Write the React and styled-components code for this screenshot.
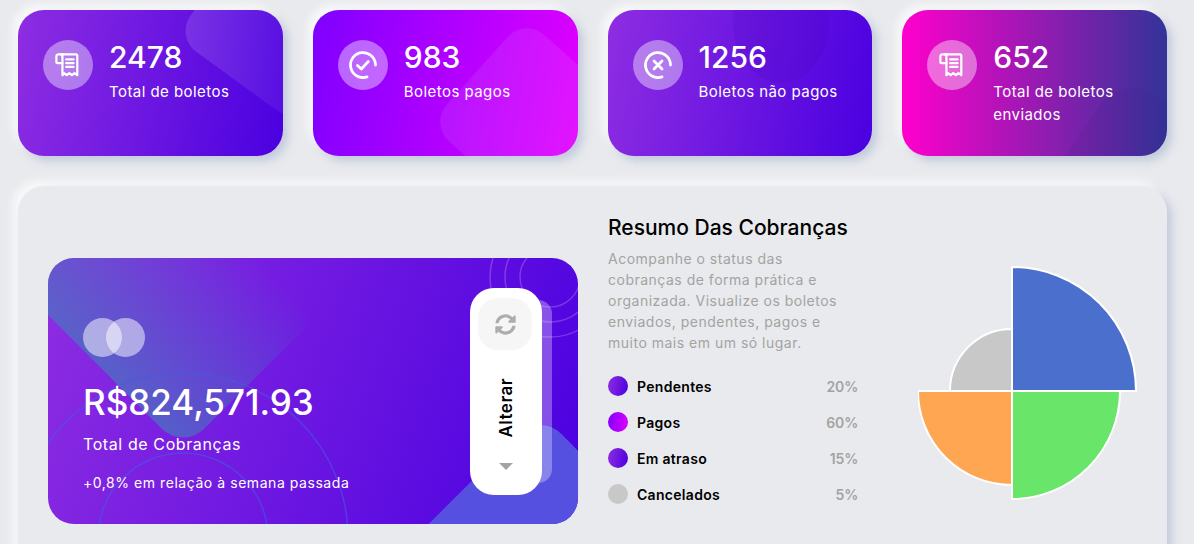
import React from "react";
import styled, { createGlobalStyle } from "styled-components";
import { FaSyncAlt } from "react-icons/fa";

const stats = [
  { value: "2478", label: "Total de boletos", tone: "violet", icon: "receipt", blob: "one" },
  { value: "983", label: "Boletos pagos", tone: "magenta", icon: "check", blob: "two" },
  { value: "1256", label: "Boletos não pagos", tone: "violet", icon: "cross", blob: "three" },
  { value: "652", label: "Total de boletos enviados", tone: "sunset", icon: "receipt", blob: "four" },
];

const legend = [
  { name: "Pendentes", pct: "20%", tone: "violet" },
  { name: "Pagos", pct: "60%", tone: "magenta" },
  { name: "Em atraso", pct: "15%", tone: "violet" },
  { name: "Cancelados", pct: "5%", tone: "grey" },
];

const gradients = {
  violet: "linear-gradient(100deg, #8e2de2, #4a00e0)",
  magenta: "linear-gradient(100deg, #7f00ff, #e100ff)",
  sunset: "linear-gradient(90deg, #ff00cc, #333399)",
  grey: "linear-gradient(#c8c8c8, #c8c8c8)",
};

const blobs = {
  one: `
    left: 187px; top: -65px; width: 150px; height: 150px; border-radius: 26px;
    transform: rotate(36deg);
    background: linear-gradient(54deg, rgba(255,255,255,.14), rgba(255,255,255,0) 85%);
  `,
  two: `
    left: 146px; top: 37px; width: 143px; height: 143px; border-radius: 26px;
    transform: rotate(42deg);
    background: rgba(255,255,255,.08);
  `,
  three: `
    left: 125px; top: -47px; width: 96px; height: 120px; border-radius: 50%;
    background: rgba(60,0,170,.12);
  `,
  four: `
    left: 172px; top: 88px; width: 130px; height: 130px; border-radius: 40px;
    transform: rotate(35deg);
    background: rgba(50,20,110,.08);
  `,
};

const ReceiptIcon = () => (
  <svg width="26" height="26" viewBox="0 0 28 28" fill="none" stroke="#fff" strokeWidth="2.4" strokeLinecap="round" strokeLinejoin="round">
    <path d="M9 2.5H3.5a2 2 0 0 0-2 2V11a1 1 0 0 0 1 1H8" />
    <path d="M6 2.5h16.5a1.5 1.5 0 0 1 1.5 1.5v21l-3-2.2-2.8 2.2-2.8-2.2-2.8 2.2-2.8-2.2L8 25V5a2.5 2.5 0 0 0-2-2.5z" />
    <path d="M12 8h8M12 12h8M12 16h8" />
  </svg>
);

const CheckIcon = () => (
  <svg width="28" height="28" viewBox="0 0 28 28" fill="none" stroke="#fff" strokeWidth="2.8" strokeLinecap="round" strokeLinejoin="round">
    <path d="M26.5 14A12.5 12.5 0 1 0 18 25.9" />
    <path d="M8.5 14.5l3.8 3.5 7-7.5" />
  </svg>
);

const CrossIcon = () => (
  <svg width="28" height="28" viewBox="0 0 28 28" fill="none" stroke="#fff" strokeWidth="2.8" strokeLinecap="round" strokeLinejoin="round">
    <path d="M26.5 14A12.5 12.5 0 1 0 18 25.9" />
    <path d="M10 10l8 8M18 10l-8 8" />
  </svg>
);

const icons = { receipt: ReceiptIcon, check: CheckIcon, cross: CrossIcon };

export default function App() {
  return (
    <>
      <GlobalStyle />
      <Page>
        <StatsRow>
          {stats.map((s) => {
            const Icon = icons[s.icon];
            return (
              <StatCard key={s.value} $tone={s.tone}>
                <StatBlob $blob={s.blob} />
                <IconCircle>
                  <Icon />
                </IconCircle>
                <StatText>
                  <StatValue>{s.value}</StatValue>
                  <StatLabel>{s.label}</StatLabel>
                </StatText>
              </StatCard>
            );
          })}
        </StatsRow>

        <Panel>
          <BigCard>
            <TopShape />
            <BottomShape />
            <CardRings viewBox="0 0 530 266" width="530" height="266" fill="none">
              <circle cx="502" cy="19" r="30" stroke="rgba(255,255,255,.2)" strokeWidth="1.5" />
              <circle cx="502" cy="19" r="45" stroke="rgba(255,255,255,.2)" strokeWidth="1.5" />
              <circle cx="502" cy="19" r="60" stroke="rgba(255,255,255,.2)" strokeWidth="1.5" />
              <circle cx="135" cy="280" r="85" stroke="rgba(70,90,225,.6)" strokeWidth="1.5" />
              <circle cx="135" cy="280" r="165" stroke="rgba(70,90,225,.6)" strokeWidth="1.5" />
            </CardRings>
            <CardContent>
              <Logo>
                <LogoDot />
                <LogoDot $second />
              </Logo>
              <Amount>R$824,571.93</Amount>
              <AmountLabel>Total de Cobranças</AmountLabel>
              <AmountNote>+0,8% em relação à semana passada</AmountNote>
            </CardContent>
            <SwitchBack />
            <SwitchPill>
              <SwitchIcon>
                <FaSyncAlt size={21} />
              </SwitchIcon>
              <SwitchText>Alterar</SwitchText>
              <Caret />
            </SwitchPill>
          </BigCard>

          <Summary>
            <SummaryTitle>Resumo Das Cobranças</SummaryTitle>
            <SummaryText>
              Acompanhe o status das cobranças de forma prática e organizada. Visualize os boletos enviados, pendentes, pagos e muito mais em um só lugar.
            </SummaryText>
            <Legend>
              {legend.map((l) => (
                <LegendRow key={l.name}>
                  <LegendDot $tone={l.tone} />
                  <LegendName>{l.name}</LegendName>
                  <LegendPct>{l.pct}</LegendPct>
                </LegendRow>
              ))}
            </Legend>
          </Summary>

          <ChartBox>
            <svg width="224" height="252" viewBox="0 0 224 252" stroke="#fff" strokeWidth="2">
              <path d="M94 126V64A62 62 0 0 0 32 126Z" fill="#c8c8c8" />
              <path d="M94 126H0A94 94 0 0 0 94 220Z" fill="#ffa652" />
              <path d="M94 126V234A108 108 0 0 0 202 126Z" fill="#69e569" />
              <path d="M94 126H218A124 124 0 0 0 94 2Z" fill="#4a6fcd" />
            </svg>
          </ChartBox>
        </Panel>
      </Page>
    </>
  );
}

const GlobalStyle = createGlobalStyle`
  html, body {
    margin: 0;
    padding: 0;
    height: 100%;
    overflow: hidden;
    background: #e9eaed;
  }
  * {
    box-sizing: border-box;
  }
`;

const Page = styled.div`
  width: 1194px;
  padding: 10px 27px 0 18px;
  font-family: "Inter", "Noto Sans", sans-serif;
`;

const StatsRow = styled.div`
  display: grid;
  grid-template-columns: repeat(4, 1fr);
  gap: 30px;
`;

const StatCard = styled.div`
  position: relative;
  height: 146px;
  border-radius: 26px;
  padding: 30px 25px;
  display: flex;
  gap: 16px;
  overflow: hidden;
  background: ${(p) => gradients[p.$tone]};
  box-shadow: 5px 5px 10px rgba(170, 185, 210, 0.65), -5px -5px 10px rgba(255, 255, 255, 0.8);
`;

const StatBlob = styled.div`
  position: absolute;
  ${(p) => blobs[p.$blob]}
`;

const IconCircle = styled.div`
  position: relative;
  flex: none;
  width: 50px;
  height: 50px;
  border-radius: 50%;
  background: rgba(255, 255, 255, 0.4);
  display: flex;
  align-items: center;
  justify-content: center;
`;

const StatText = styled.div`
  position: relative;
  color: #fff;
`;

const StatValue = styled.div`
  font-size: 30px;
  line-height: 34px;
  font-weight: 500;
`;

const StatLabel = styled.div`
  margin-top: 6px;
  font-size: 15px;
  line-height: 23px;
  letter-spacing: 0.45px;
`;

const Panel = styled.div`
  margin-top: 30px;
  height: 410px;
  border-radius: 26px;
  padding: 30px;
  display: flex;
  align-items: center;
  background: #e9eaed;
  box-shadow: 5px 5px 10px rgba(170, 185, 210, 0.65), -5px -5px 10px rgba(255, 255, 255, 0.8);
`;

const BigCard = styled.div`
  position: relative;
  flex: none;
  width: 530px;
  height: 266px;
  border-radius: 26px;
  overflow: hidden;
  background: linear-gradient(110deg, #8e2de2, #4a00e0);
`;

const TopShape = styled.div`
  position: absolute;
  left: 0;
  top: -134px;
  width: 270px;
  height: 270px;
  border-radius: 30px;
  transform: rotate(45deg);
  background: linear-gradient(0deg, rgba(70, 120, 190, 0.7), rgba(70, 120, 190, 0) 70%);
`;

const BottomShape = styled.div`
  position: absolute;
  left: 397px;
  top: 194px;
  width: 190px;
  height: 190px;
  border-radius: 30px;
  transform: rotate(45deg);
  background: #5650e0;
`;

const CardRings = styled.svg`
  position: absolute;
  left: 0;
  top: 0;
`;

const CardContent = styled.div`
  position: relative;
  padding: 60px 0 0 35px;
  color: #fff;
`;

const Logo = styled.div`
  display: flex;
  height: 39px;
`;

const LogoDot = styled.div`
  width: 39px;
  height: 39px;
  border-radius: 50%;
  background: rgba(255, 255, 255, 0.5);
  margin-left: ${(p) => (p.$second ? "-16px" : "0")};
`;

const Amount = styled.div`
  margin-top: 22px;
  font-size: 35px;
  line-height: 46px;
  font-weight: 500;
`;

const AmountLabel = styled.div`
  margin-top: 7px;
  font-size: 16px;
  line-height: 24px;
  letter-spacing: 0.6px;
`;

const AmountNote = styled.div`
  margin-top: 16px;
  font-size: 14px;
  line-height: 21px;
  letter-spacing: 0.55px;
`;

const SwitchBack = styled.div`
  position: absolute;
  left: 472px;
  top: 42px;
  width: 32px;
  height: 183px;
  border-radius: 14px;
  background: rgba(255, 255, 255, 0.3);
`;

const SwitchPill = styled.div`
  position: absolute;
  left: 422px;
  top: 30px;
  width: 72px;
  height: 207px;
  border-radius: 24px;
  background: #fff;
  padding: 10px 8px;
  display: flex;
  flex-direction: column;
  align-items: center;
`;

const SwitchIcon = styled.div`
  flex: none;
  align-self: flex-start;
  width: 54px;
  height: 52px;
  border-radius: 20px;
  background: #f6f6f6;
  color: #adadad;
  display: flex;
  align-items: center;
  justify-content: center;
`;

const SwitchText = styled.div`
  margin-top: 28px;
  writing-mode: vertical-rl;
  transform: rotate(180deg);
  font-size: 17px;
  line-height: 20px;
  letter-spacing: 0.5px;
  font-weight: 600;
  color: #000;
`;

const Caret = styled.div`
  margin-top: 25px;
  width: 0;
  height: 0;
  border-left: 7px solid transparent;
  border-right: 7px solid transparent;
  border-top: 7px solid #a3a3a3;
`;

const Summary = styled.div`
  flex: none;
  align-self: flex-start;
  width: 250px;
  margin-left: 30px;
`;

const SummaryTitle = styled.div`
  font-size: 21px;
  line-height: 24px;
  font-weight: 500;
  color: #000;
`;

const SummaryText = styled.p`
  margin: 8px 0 0;
  width: 235px;
  font-size: 14px;
  line-height: 21px;
  letter-spacing: 0.5px;
  color: #a3a3a3;
`;

const Legend = styled.div`
  margin-top: 23px;
  display: flex;
  flex-direction: column;
  gap: 16px;
`;

const LegendRow = styled.div`
  display: flex;
  align-items: center;
  height: 20px;
`;

const LegendDot = styled.div`
  width: 20px;
  height: 20px;
  border-radius: 50%;
  margin-right: 9px;
  background: ${(p) => gradients[p.$tone]};
`;

const LegendName = styled.div`
  flex: 1;
  font-size: 14px;
  letter-spacing: 0.3px;
  font-weight: 600;
  color: #000;
`;

const LegendPct = styled.div`
  font-size: 14px;
  letter-spacing: -0.2px;
  font-weight: 600;
  color: #a3a3a3;
`;

const ChartBox = styled.div`
  flex: none;
  margin-left: 60px;
  display: flex;
  align-items: center;
`;
